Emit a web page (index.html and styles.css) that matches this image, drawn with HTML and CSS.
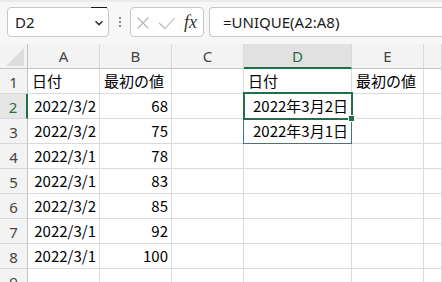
FILE: index.html
```html
<!DOCTYPE html>
<html lang="ja">
<head>
<meta charset="utf-8">
<link rel="stylesheet" href="styles.css">
</head>
<body>
<div class="toolbar">
  <div class="namebox">
    <span class="ref">D2</span>
    <span class="dd"><svg width="10" height="6" viewBox="0 0 10 6"><path d="M1.5 1.2 L5 4.6 L8.5 1.2" fill="none" stroke="#333" stroke-width="1.5"/></svg></span>
  </div>
  <div class="grip"><i></i><i></i><i></i></div>
  <div class="fxbox">
    <svg class="marks" width="46" height="28" viewBox="0 0 46 28">
      <path d="M6.5 9.5 L17.5 20.5 M17.5 9.5 L6.5 20.5" stroke="#b4b4b4" stroke-width="1.1" fill="none"/>
      <path d="M28 15 L34 20.5 L43.5 10" stroke="#b4b4b4" stroke-width="1.1" fill="none"/>
    </svg>
    <span class="fx">fx</span>
  </div>
  <div class="formula">=UNIQUE(A2:A8)</div>
</div>
<div class="sheet">
  <div class="hd corner"><span class="tri"></span></div>
  <div class="hd col">A</div>
  <div class="hd col">B</div>
  <div class="hd col">C</div>
  <div class="hd col on">D</div>
  <div class="hd col">E</div>
  <div class="hd col last"></div>

  <div class="hd row">1</div>
  <div class="c">日付</div><div class="c">最初の値</div><div class="c"></div><div class="c">日付</div><div class="c">最初の値</div><div class="c"></div>

  <div class="hd row on">2</div>
  <div class="c r">2022/3/2</div><div class="c r">68</div><div class="c"></div>
  <div class="c r sel-cell">2022年3月2日<span class="spill"></span><span class="sel"></span><span class="handle"></span></div>
  <div class="c"></div><div class="c"></div>

  <div class="hd row">3</div>
  <div class="c r">2022/3/2</div><div class="c r">75</div><div class="c"></div><div class="c r">2022年3月1日</div><div class="c"></div><div class="c"></div>

  <div class="hd row">4</div>
  <div class="c r">2022/3/1</div><div class="c r">78</div><div class="c"></div><div class="c"></div><div class="c"></div><div class="c"></div>

  <div class="hd row">5</div>
  <div class="c r">2022/3/1</div><div class="c r">83</div><div class="c"></div><div class="c"></div><div class="c"></div><div class="c"></div>

  <div class="hd row">6</div>
  <div class="c r">2022/3/2</div><div class="c r">85</div><div class="c"></div><div class="c"></div><div class="c"></div><div class="c"></div>

  <div class="hd row">7</div>
  <div class="c r">2022/3/1</div><div class="c r">92</div><div class="c"></div><div class="c"></div><div class="c"></div><div class="c"></div>

  <div class="hd row">8</div>
  <div class="c r">2022/3/1</div><div class="c r">100</div><div class="c"></div><div class="c"></div><div class="c"></div><div class="c"></div>

  <div class="hd row">9</div>
  <div class="c"></div><div class="c"></div><div class="c"></div><div class="c"></div><div class="c"></div><div class="c"></div>
</div>
</body>
</html>
```
FILE: styles.css
```css
html, body {
  margin: 0;
  padding: 0;
}
body {
  width: 442px;
  height: 282px;
  overflow: hidden;
  background: #fff;
  font-family: "Noto Sans CJK JP", "Noto Sans", sans-serif;
  color: #000;
}
.toolbar {
  height: 44px;
  box-sizing: border-box;
  background: #f7f7f7;
  border-top: 2px solid #ebebeb;
  padding: 5px 0 0 7px;
  display: flex;
  align-items: flex-start;
}
.namebox {
  width: 102px;
  height: 30px;
  box-sizing: border-box;
  background: #fff;
  border: 1px solid #c8c8c8;
  border-radius: 4px;
  display: flex;
  align-items: stretch;
}
.ref {
  flex: 1;
  padding-left: 7px;
  font-family: "Noto Sans", sans-serif;
  font-size: 15px;
  line-height: 28px;
  color: #222;
}
.dd {
  width: 16px;
  margin-top: -1px;
  margin-right: 1px;
  border-top: 1px solid #1a1a1a;
  display: flex;
  align-items: center;
  justify-content: center;
}
.dd svg { display: block; margin-top: 1px; }
.grip {
  width: 21px;
  height: 30px;
  display: flex;
  flex-direction: column;
  align-items: center;
  justify-content: center;
  gap: 2px;
}
.grip i {
  display: block;
  width: 2px;
  height: 2px;
  background: #8a8a8a;
}
.fxbox {
  width: 74px;
  height: 30px;
  box-sizing: border-box;
  background: #fff;
  border: 1px solid #c8c8c8;
  border-radius: 4px;
  display: flex;
  align-items: center;
}
.marks { display: block; }
.fx {
  margin-left: 7px;
  font-family: "Liberation Serif", serif;
  font-style: italic;
  font-size: 18px;
  line-height: 28px;
  color: #333;
}
.formula {
  flex: 1;
  margin-left: 5px;
  height: 30px;
  box-sizing: border-box;
  background: #fff;
  border: 1px solid #c8c8c8;
  border-right: none;
  border-radius: 4px 0 0 4px;
  padding-left: 13px;
  font-family: "Noto Sans", sans-serif;
  font-size: 15px;
  line-height: 28px;
  color: #1a1a1a;
}
.sheet {
  display: grid;
  grid-template-columns: 28px 72px 72px 72px 108px 72px 1fr;
  grid-auto-rows: 25px;
}
.hd {
  box-sizing: border-box;
  background: #f3f3f3;
  border-right: 1px solid #d9d9d9;
  border-bottom: 1px solid #d9d9d9;
  font-family: "Noto Sans", sans-serif;
  font-size: 15px;
  color: #444;
  display: flex;
  align-items: center;
  justify-content: center;
}
.hd.col {
  border-bottom: 1px solid #c4c4c4;
}
.hd.col.on {
  background: #e1e1e1;
  color: #1e6e42;
  border-bottom: 2px solid #1e7145;
}
.hd.corner {
  border-bottom: 1px solid #c4c4c4;
  border-right: 1px solid #c4c4c4;
  align-items: flex-end;
  justify-content: flex-end;
  padding: 0 3px 2px 0;
}
.tri {
  display: block;
  width: 0;
  height: 0;
  border-left: 18px solid transparent;
  border-bottom: 18px solid #dcdcdc;
}
.hd.row {
  border-right: 1px solid #c4c4c4;
  padding-top: 1px;
}
.hd.row.on {
  background: #e6e6e6;
  color: #1e6e42;
  border-right: 2px solid #1e7145;
}
.c {
  box-sizing: border-box;
  border-right: 1px solid #dadada;
  border-bottom: 1px solid #dadada;
  padding: 0 3px 1px 4px;
  font-size: 15px;
  line-height: 23px;
  white-space: nowrap;
  overflow: visible;
}
.c.r {
  text-align: right;
}
.sel-cell {
  position: relative;
}
.spill {
  position: absolute;
  left: -1px;
  top: -1px;
  width: 109px;
  height: 51px;
  box-sizing: border-box;
  border: 1px solid #3a6cc8;
  pointer-events: none;
}
.sel {
  position: absolute;
  left: -1px;
  top: -2px;
  width: 110px;
  height: 28px;
  box-sizing: border-box;
  border: 2px solid #1e7145;
  pointer-events: none;
}
.handle {
  position: absolute;
  left: 104px;
  top: 21px;
  width: 7px;
  height: 7px;
  box-sizing: border-box;
  background: #1e7145;
  border: 1px solid #fff;
}
```
